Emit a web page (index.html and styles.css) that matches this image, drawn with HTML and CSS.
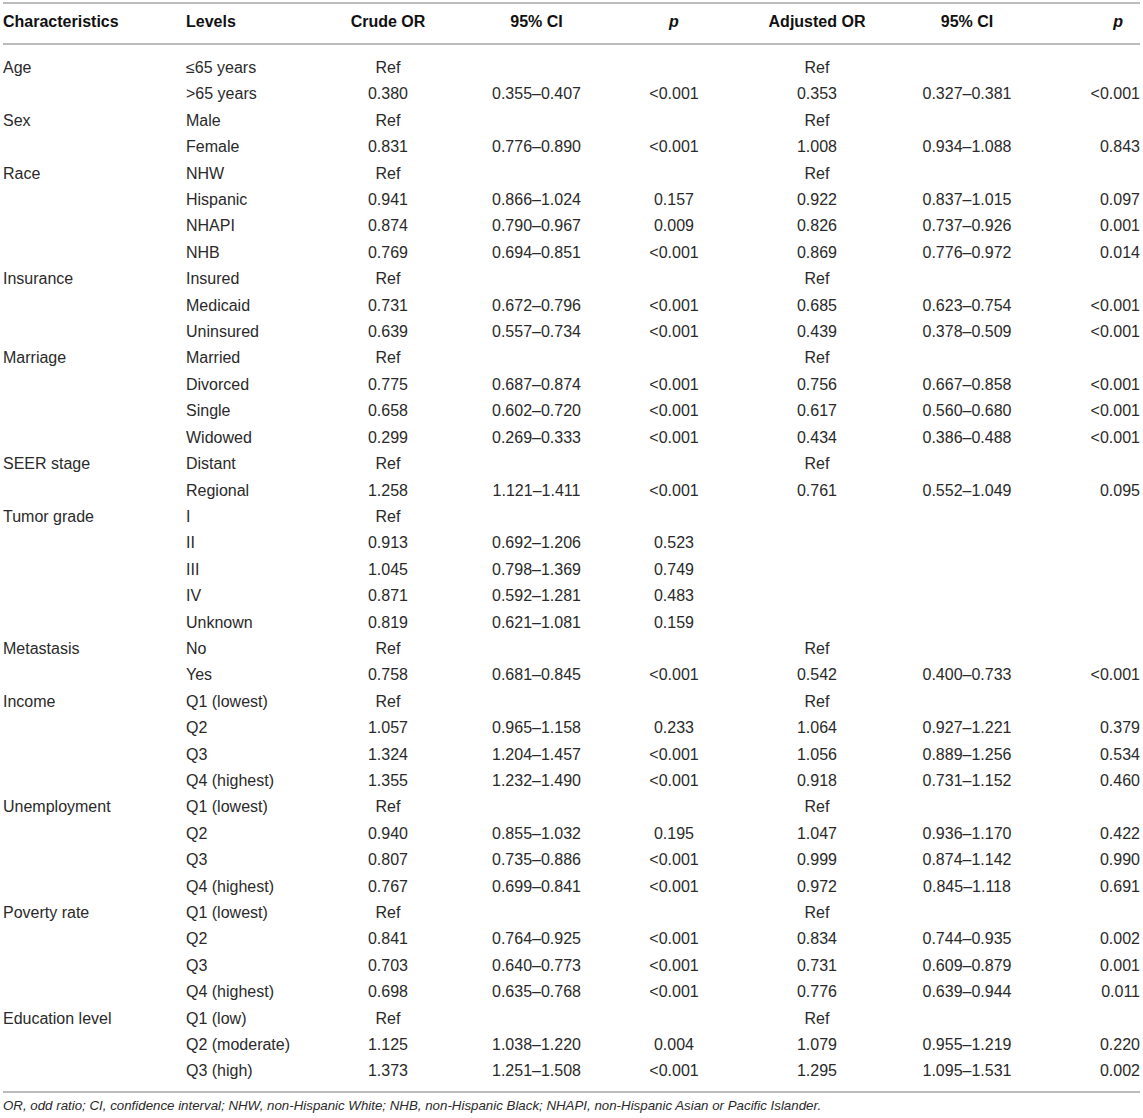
FILE: index.html
```html
<!DOCTYPE html>
<html lang="en">
<head>
<meta charset="utf-8">
<title>Table</title>
<link rel="stylesheet" href="styles.css">
</head>
<body>
<div class="page">
<table class="or-table">
<colgroup>
<col class="c1"><col class="c2"><col class="c3"><col class="c4"><col class="c5"><col class="c6"><col class="c7"><col class="c8">
</colgroup>
<thead>
<tr>
<th class="left">Characteristics</th>
<th class="left">Levels</th>
<th>Crude OR</th>
<th>95% CI</th>
<th><i>p</i></th>
<th>Adjusted OR</th>
<th>95% CI</th>
<th class="last"><i>p</i></th>
</tr>
</thead>
<tbody>
<tr><td class="left">Age</td><td class="left">≤65 years</td><td>Ref</td><td></td><td></td><td>Ref</td><td></td><td class="last"></td></tr>
<tr><td class="left"></td><td class="left">&gt;65 years</td><td>0.380</td><td>0.355–0.407</td><td>&lt;0.001</td><td>0.353</td><td>0.327–0.381</td><td class="last">&lt;0.001</td></tr>
<tr><td class="left">Sex</td><td class="left">Male</td><td>Ref</td><td></td><td></td><td>Ref</td><td></td><td class="last"></td></tr>
<tr><td class="left"></td><td class="left">Female</td><td>0.831</td><td>0.776–0.890</td><td>&lt;0.001</td><td>1.008</td><td>0.934–1.088</td><td class="last">0.843</td></tr>
<tr><td class="left">Race</td><td class="left">NHW</td><td>Ref</td><td></td><td></td><td>Ref</td><td></td><td class="last"></td></tr>
<tr><td class="left"></td><td class="left">Hispanic</td><td>0.941</td><td>0.866–1.024</td><td>0.157</td><td>0.922</td><td>0.837–1.015</td><td class="last">0.097</td></tr>
<tr><td class="left"></td><td class="left">NHAPI</td><td>0.874</td><td>0.790–0.967</td><td>0.009</td><td>0.826</td><td>0.737–0.926</td><td class="last">0.001</td></tr>
<tr><td class="left"></td><td class="left">NHB</td><td>0.769</td><td>0.694–0.851</td><td>&lt;0.001</td><td>0.869</td><td>0.776–0.972</td><td class="last">0.014</td></tr>
<tr><td class="left">Insurance</td><td class="left">Insured</td><td>Ref</td><td></td><td></td><td>Ref</td><td></td><td class="last"></td></tr>
<tr><td class="left"></td><td class="left">Medicaid</td><td>0.731</td><td>0.672–0.796</td><td>&lt;0.001</td><td>0.685</td><td>0.623–0.754</td><td class="last">&lt;0.001</td></tr>
<tr><td class="left"></td><td class="left">Uninsured</td><td>0.639</td><td>0.557–0.734</td><td>&lt;0.001</td><td>0.439</td><td>0.378–0.509</td><td class="last">&lt;0.001</td></tr>
<tr><td class="left">Marriage</td><td class="left">Married</td><td>Ref</td><td></td><td></td><td>Ref</td><td></td><td class="last"></td></tr>
<tr><td class="left"></td><td class="left">Divorced</td><td>0.775</td><td>0.687–0.874</td><td>&lt;0.001</td><td>0.756</td><td>0.667–0.858</td><td class="last">&lt;0.001</td></tr>
<tr><td class="left"></td><td class="left">Single</td><td>0.658</td><td>0.602–0.720</td><td>&lt;0.001</td><td>0.617</td><td>0.560–0.680</td><td class="last">&lt;0.001</td></tr>
<tr><td class="left"></td><td class="left">Widowed</td><td>0.299</td><td>0.269–0.333</td><td>&lt;0.001</td><td>0.434</td><td>0.386–0.488</td><td class="last">&lt;0.001</td></tr>
<tr><td class="left">SEER stage</td><td class="left">Distant</td><td>Ref</td><td></td><td></td><td>Ref</td><td></td><td class="last"></td></tr>
<tr><td class="left"></td><td class="left">Regional</td><td>1.258</td><td>1.121–1.411</td><td>&lt;0.001</td><td>0.761</td><td>0.552–1.049</td><td class="last">0.095</td></tr>
<tr><td class="left">Tumor grade</td><td class="left">I</td><td>Ref</td><td></td><td></td><td></td><td></td><td class="last"></td></tr>
<tr><td class="left"></td><td class="left">II</td><td>0.913</td><td>0.692–1.206</td><td>0.523</td><td></td><td></td><td class="last"></td></tr>
<tr><td class="left"></td><td class="left">III</td><td>1.045</td><td>0.798–1.369</td><td>0.749</td><td></td><td></td><td class="last"></td></tr>
<tr><td class="left"></td><td class="left">IV</td><td>0.871</td><td>0.592–1.281</td><td>0.483</td><td></td><td></td><td class="last"></td></tr>
<tr><td class="left"></td><td class="left">Unknown</td><td>0.819</td><td>0.621–1.081</td><td>0.159</td><td></td><td></td><td class="last"></td></tr>
<tr><td class="left">Metastasis</td><td class="left">No</td><td>Ref</td><td></td><td></td><td>Ref</td><td></td><td class="last"></td></tr>
<tr><td class="left"></td><td class="left">Yes</td><td>0.758</td><td>0.681–0.845</td><td>&lt;0.001</td><td>0.542</td><td>0.400–0.733</td><td class="last">&lt;0.001</td></tr>
<tr><td class="left">Income</td><td class="left">Q1 (lowest)</td><td>Ref</td><td></td><td></td><td>Ref</td><td></td><td class="last"></td></tr>
<tr><td class="left"></td><td class="left">Q2</td><td>1.057</td><td>0.965–1.158</td><td>0.233</td><td>1.064</td><td>0.927–1.221</td><td class="last">0.379</td></tr>
<tr><td class="left"></td><td class="left">Q3</td><td>1.324</td><td>1.204–1.457</td><td>&lt;0.001</td><td>1.056</td><td>0.889–1.256</td><td class="last">0.534</td></tr>
<tr><td class="left"></td><td class="left">Q4 (highest)</td><td>1.355</td><td>1.232–1.490</td><td>&lt;0.001</td><td>0.918</td><td>0.731–1.152</td><td class="last">0.460</td></tr>
<tr><td class="left">Unemployment</td><td class="left">Q1 (lowest)</td><td>Ref</td><td></td><td></td><td>Ref</td><td></td><td class="last"></td></tr>
<tr><td class="left"></td><td class="left">Q2</td><td>0.940</td><td>0.855–1.032</td><td>0.195</td><td>1.047</td><td>0.936–1.170</td><td class="last">0.422</td></tr>
<tr><td class="left"></td><td class="left">Q3</td><td>0.807</td><td>0.735–0.886</td><td>&lt;0.001</td><td>0.999</td><td>0.874–1.142</td><td class="last">0.990</td></tr>
<tr><td class="left"></td><td class="left">Q4 (highest)</td><td>0.767</td><td>0.699–0.841</td><td>&lt;0.001</td><td>0.972</td><td>0.845–1.118</td><td class="last">0.691</td></tr>
<tr><td class="left">Poverty rate</td><td class="left">Q1 (lowest)</td><td>Ref</td><td></td><td></td><td>Ref</td><td></td><td class="last"></td></tr>
<tr><td class="left"></td><td class="left">Q2</td><td>0.841</td><td>0.764–0.925</td><td>&lt;0.001</td><td>0.834</td><td>0.744–0.935</td><td class="last">0.002</td></tr>
<tr><td class="left"></td><td class="left">Q3</td><td>0.703</td><td>0.640–0.773</td><td>&lt;0.001</td><td>0.731</td><td>0.609–0.879</td><td class="last">0.001</td></tr>
<tr><td class="left"></td><td class="left">Q4 (highest)</td><td>0.698</td><td>0.635–0.768</td><td>&lt;0.001</td><td>0.776</td><td>0.639–0.944</td><td class="last">0.011</td></tr>
<tr><td class="left">Education level</td><td class="left">Q1 (low)</td><td>Ref</td><td></td><td></td><td>Ref</td><td></td><td class="last"></td></tr>
<tr><td class="left"></td><td class="left">Q2 (moderate)</td><td>1.125</td><td>1.038–1.220</td><td>0.004</td><td>1.079</td><td>0.955–1.219</td><td class="last">0.220</td></tr>
<tr><td class="left"></td><td class="left">Q3 (high)</td><td>1.373</td><td>1.251–1.508</td><td>&lt;0.001</td><td>1.295</td><td>1.095–1.531</td><td class="last">0.002</td></tr>
</tbody>
</table>
<p class="footnote">OR, odd ratio; CI, confidence interval; NHW, non-Hispanic White; NHB, non-Hispanic Black; NHAPI, non-Hispanic Asian or Pacific Islander.</p>
</div>
</body>
</html>
```

FILE: styles.css
```css
html, body {
  margin: 0;
  padding: 0;
  background: #ffffff;
}

.page {
  padding: 2px 3px 0 3px;
  width: 1137px;
  font-family: "Liberation Sans", Arial, Helvetica, sans-serif;
  color: #2a2a2a;
}

.or-table {
  width: 1137px;
  table-layout: fixed;
  border-collapse: collapse;
  font-size: 16px;
}

.c1 { width: 183px; }
.c2 { width: 140px; }
.c3 { width: 124px; }
.c4 { width: 173px; }
.c5 { width: 102px; }
.c6 { width: 184px; }
.c7 { width: 116px; }
.c8 { width: 115px; }

.or-table thead tr {
  border-top: 2px solid #bcbcbc;
  border-bottom: 2px solid #bcbcbc;
}

.or-table th {
  font-weight: bold;
  color: #111111;
  text-align: center;
  padding: 7px 0 10px 0;
  line-height: 22px;
  white-space: nowrap;
}

.or-table td {
  text-align: center;
  padding: 0;
  height: 26.4px;
  line-height: 26.4px;
  white-space: nowrap;
}

.or-table .left {
  text-align: left;
}

.or-table td.last {
  text-align: right;
  padding-right: 0;
}

.or-table th.last {
  text-align: right;
  padding-right: 17px;
}

.or-table tbody tr:first-child td {
  padding-top: 10px;
}

.or-table tbody tr:last-child td {
  padding-bottom: 6px;
}

.or-table tbody tr:last-child {
  border-bottom: 2px solid #bcbcbc;
}

.footnote {
  margin: 0;
  padding-top: 3px;
  font-size: 13.3px;
  line-height: 20px;
  font-style: italic;
  color: #2a2a2a;
  white-space: nowrap;
}
```
